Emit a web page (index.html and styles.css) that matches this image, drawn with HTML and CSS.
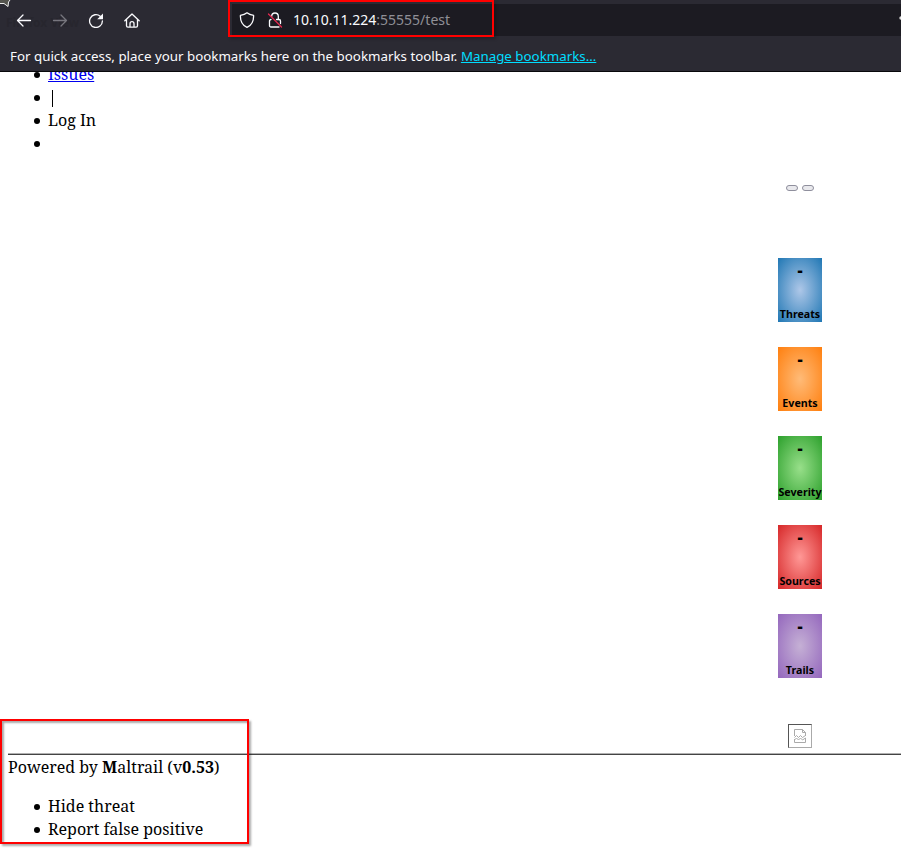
FILE: index.html
```html
<!DOCTYPE html>
<html lang="en">
<head>
<meta charset="utf-8">
<title>Maltrail</title>
<link rel="stylesheet" href="styles.css">
</head>
<body>
<header class="browser">
  <div class="toolbar">
    <div class="tools">
      <span class="ghost">Firefox View</span>
      <svg class="tab-mark" width="12" height="8" viewBox="0 0 12 8"><path d="M0 0h10L8.500 2v4.500L4 3.500H0z" fill="#55554f"/><path d="M0 3.500h4l4 3 .5-4.500 1.500-2" fill="none" stroke="#eee" stroke-width="1"/></svg>
      <svg class="tool" viewBox="0 0 16 16"><path d="M14.500 8.500H1.500M7 3 1.500 8.500 7 14"/></svg>
      <svg class="tool dim" viewBox="0 0 16 16"><path d="M1.500 8.500h13M9 3l5.500 5.500L9 14"/></svg>
      <svg class="tool" viewBox="0 0 16 16"><path d="M12.200 4.200A6.400 6.400 0 1 0 14.400 9"/><path class="solid" d="M15 1.500v5.800H9.200z"/></svg>
      <svg class="tool home" viewBox="0 0 16 16"><path d="M.8 8.800 8 2l7.200 6.800M2.500 7.500v6.300q0 1.400 1.400 1.400h8.200q1.400 0 1.400-1.400V7.500M6 15v-3.300a2 2 0 0 1 4 0V15"/></svg>
    </div>
    <div class="address">
      <svg class="tool" viewBox="0 0 16 16"><path d="M8 .8C6 2.400 3.800 3 1.400 3.400 1.200 9 3 13 8 15.300 13 13 14.800 9 14.600 3.400 12.200 3 10 2.400 8 .8z"/></svg>
      <svg class="tool" viewBox="0 0 16 16"><path d="M4.700 4.300a3.300 3.300 0 0 1 6.600 0v2.900M9.500 7.500H12q1.500 0 1.500 1.500v2.500M12 15H4q-1.500 0-1.500-1.500V9q0-1.500 1.500-1.500"/><path class="slash" d="m1.500 2 13 13"/></svg>
      <span class="url"><b>10.10.11.224</b>:55555/test</span>
      <svg class="edge" width="2" height="4" viewBox="0 0 2 4"><circle cx="2" cy="2" r="1.700" fill="#ddd"/></svg>
    </div>
  </div>
  <div class="bookmarks">For quick access, place your bookmarks here on the bookmarks toolbar. <a>Manage bookmarks…</a></div>
</header>
<main class="page">
  <ul class="nav">
    <li><a>Issues</a></li>
    <li><i class="bar"></i></li>
    <li>Log In</li>
    <li></li>
  </ul>
  <section class="side">
    <div class="buttons"><i></i><i></i></div>
    <div class="card threats"><b>-</b><span>Threats</span></div>
    <div class="card events"><b>-</b><span>Events</span></div>
    <div class="card severity"><b>-</b><span>Severity</span></div>
    <div class="card sources"><b>-</b><span>Sources</span></div>
    <div class="card trails"><b>-</b><span>Trails</span></div>
    <div class="missing"><svg width="12" height="14" viewBox="0 0 12 14"><path d="M.5 7V.5h8l3 3V7M8.500.5v3h3M.5 8.500l2-2 2 2 2-2 2 2 3-2M.5 11l2-2 2 2 2-2 2 2 3-2M.5 10v3.500h11V9"/></svg></div>
  </section>
  <footer class="footer">
    <div class="powered">Powered by <b>M</b>altrail (v<b>0.53</b>)</div>
    <ul class="menu"><li>Hide threat</li><li>Report false positive</li></ul>
  </footer>
</main>
<div class="mark mark-url"></div>
<div class="mark mark-version"></div>
</body>
</html>
```
FILE: styles.css
```css
* { box-sizing: border-box; }
body { margin: 0; height: 856px; overflow: hidden; background: #fff; color: #000; font: 16px/23px "Noto Serif", "DejaVu Serif Condensed", "DejaVu Serif", serif; position: relative; }
.browser { height: 72px; background: #2b2a33; border-bottom: 1px solid #08080b; font-family: "Noto Sans", sans-serif; color: #fbfbfe; }
.toolbar { height: 36px; padding-top: 4px; display: flex; }
.tools { width: 232px; height: 32px; padding-left: 16px; display: flex; align-items: center; gap: 20px; }
.ghost { position: absolute; left: 6px; top: 13px; font: bold 12px/20px "Noto Sans", sans-serif; color: #27262e; }
.tab-mark { position: absolute; left: 0; top: 0; }
.tool { position: relative; width: 16px; height: 16px; fill: none; stroke: #fbfbfe; stroke-width: 1.3; stroke-linecap: round; stroke-linejoin: round; }
.home { margin-left: -.5px; }
.dim { stroke: #77767e; }
.tool .solid { fill: #fbfbfe; stroke: none; }
.slash { stroke: #e22850; }
.address { flex: 1; height: 32px; padding-left: 7px; display: flex; align-items: center; gap: 12px; background: #1c1b22; }
.url { font-size: 14px; line-height: 20px; color: #8f8f96; margin-left: -2px; }
.url b { color: #fbfbfe; font-weight: 400; }
.edge { margin: -4px 0 0 auto; }
.bookmarks { padding: 10px 0 0 10px; font-size: 13.333px; line-height: 20px; white-space: nowrap; }
.bookmarks a { color: #00ddff; text-decoration: underline; }
.page { height: 784px; overflow: hidden; display: flex; flex-direction: column; }
ul { margin: 0; padding-left: 48px; list-style: none; }
.nav { height: 92px; margin-top: -9px; flex: none; }
li { height: 23px; display: flex; align-items: center; }
li::before { content: ""; flex: none; width: 6px; height: 6px; margin: 0 8px 0 -14px; border-radius: 50%; background: #000; }
.nav a { color: #0000ee; text-decoration: underline; }
.bar { width: 1px; height: 17px; margin: 1px 0 0 4px; background: #000; }
.side { width: 44px; margin: 30px 0 0 778px; display: flex; flex-direction: column; align-items: center; }
.buttons { display: flex; gap: 4px; margin-bottom: 67px; }
.buttons i { width: 12px; height: 6px; border: 1px solid #8f8f9d; border-radius: 3px; background: #e9e9ed; }
.card { width: 44px; height: 64px; padding-top: 1px; margin-bottom: 25px; display: flex; flex-direction: column; align-items: center; justify-content: space-between; font: bold 10.667px/15px "Noto Sans", sans-serif; }
.card b { font-size: 16px; line-height: 23px; }
.card span { white-space: nowrap; }
.threats { background: radial-gradient(#aec7e8, #1f77b4); }
.events { background: radial-gradient(#ffbb78, #ff7f0e); }
.severity { background: radial-gradient(#98df8a, #2ca02c); }
.sources { background: radial-gradient(#ff9896, #d62728); }
.trails { background: radial-gradient(#c5b0d5, #9467bd); }
.missing { width: 24px; height: 24px; margin-top: 21px; border: 1px solid; border-color: #555 #aaa #aaa #555; display: flex; align-items: center; justify-content: center; }
.missing svg { fill: none; stroke: #aaa; stroke-width: 1; }
.footer { margin: 5px 0 0 8px; border-top: 1px solid #b0b0b0; box-shadow: inset 0 1px #444; }
.powered { padding-top: 2px; }
.menu { margin-top: 16px; padding-left: 40px; }
.mark { position: absolute; border: 2px solid #f00; }
.mark-url { left: 228px; top: 0; width: 266px; height: 37px; box-shadow: 2px 2px 3px #0003; }
.mark-version { left: 0; top: 719px; width: 249px; height: 125px; box-shadow: 2px 2px 2px #0005, inset 2px 2px 2px #0005; }
```
